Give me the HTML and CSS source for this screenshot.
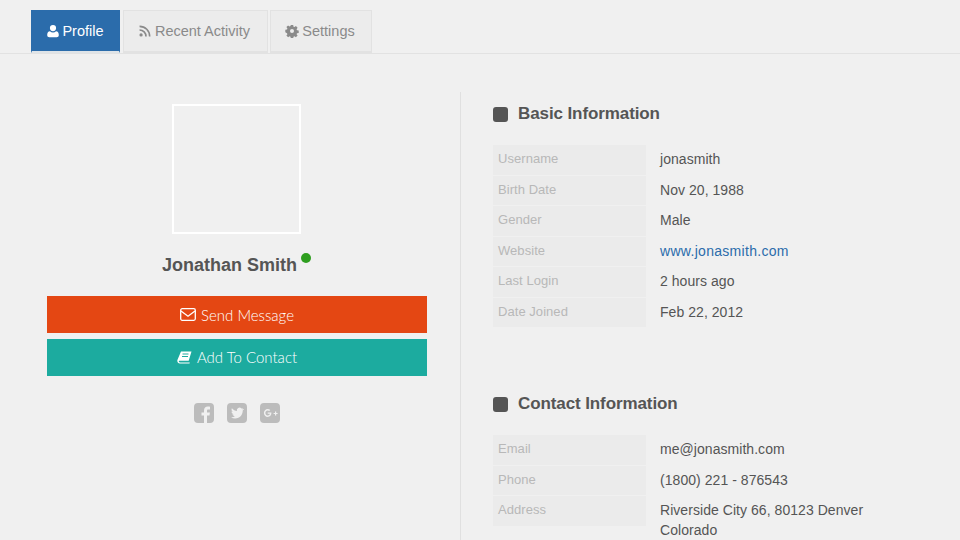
FILE: index.html
```html
<!DOCTYPE html>
<html lang="en">
<head>
<meta charset="utf-8">
<title>Profile</title>
<link rel="stylesheet" href="styles.css">
</head>
<body>
<nav class="tabs">
  <a class="tab tab-active"><svg class="ti" viewBox="0 0 12 14"><path fill="currentColor" d="M6 1a3.100 3.100 0 1 1 0 6.200A3.100 3.100 0 0 1 6 1zM3 7.200C3.800 8 4.800 8.400 6 8.400S8.200 8 9 7.200c1.800.2 2.800 1.500 2.800 3.800 0 1.500-.9 2.200-2.100 2.200H2.300C1.100 13.200.2 12.500.2 11c0-2.300 1-3.600 2.800-3.800z"/></svg>Profile</a>
  <a class="tab tab-shift"><svg class="ti ti-rss" viewBox="0 0 11 11"><g fill="none" stroke="currentColor" stroke-width="1.500"><path d="M.5 1.200c5.300 0 9.300 4 9.300 9.300"/><path d="M.5 4.600c3.400 0 5.900 2.500 5.900 5.900"/></g><circle cx="1.900" cy="9.100" r="1.500" fill="currentColor"/></svg>Recent Activity</a>
  <a class="tab tab-shift"><svg class="ti ti-gear" viewBox="0 0 14 14"><path fill="currentColor" fill-rule="evenodd" d="M5.800 1h2.400l.3 1.700 1 .4 1.400-1 1.700 1.700-1 1.400.4 1 1.700.3v2.400l-1.700.3-.4 1 1 1.400-1.700 1.700-1.400-1-1 .4-.3 1.700H5.800l-.3-1.700-1-.4-1.400 1-1.700-1.700 1-1.400-.4-1L.3 8.200V5.800L2 5.500l.4-1-1-1.400 1.700-1.700 1.400 1 1-.4zM7 5a2 2 0 1 0 0 4 2 2 0 0 0 0-4z"/></svg>Settings</a>
</nav>
<main class="layout">
  <section class="side">
    <div class="photo"></div>
    <h1 class="name">Jonathan Smith<span class="dot"></span></h1>
    <a class="btn btn-red"><svg class="bi" viewBox="0 0 16 13"><rect x=".7" y=".7" width="14.600" height="11.600" rx="1.500" fill="none" stroke="currentColor" stroke-width="1.300"/><path d="M1 3l7 5.200L15 3" fill="none" stroke="currentColor" stroke-width="1.300"/></svg>Send Message</a>
    <a class="btn btn-teal"><svg class="bi book" viewBox="0 0 15 13"><path fill="currentColor" d="M4 .5h10.500l-2.800 9.300H2.600c-.8 0-.9.500-.7 1 .2.400.6.700 1.200.7h9.700l-.3 1H2.800C1.400 12.500.4 11.500.3 10c0-.5 0-.8.200-1.300z"/><path stroke="#1cab9f" d="M5.500 3h6M5 5.500h6"/></svg>Add To Contact</a>
    <div class="social">
      <svg class="si" viewBox="0 0 20 20"><path fill="#bcbcbc" fill-rule="evenodd" d="M4 0h12a4 4 0 0 1 4 4v12a4 4 0 0 1-4 4h-3v-7.500h2.500l.4-3H13V7.800c0-.9.3-1.400 1.500-1.400H16V3.700c-.4 0-1.200-.1-2.200-.1-2.200 0-3.800 1.400-3.800 3.800v2.100H7.500v3H10V20H4a4 4 0 0 1-4-4V4a4 4 0 0 1 4-4z"/></svg>
      <svg class="si" viewBox="0 0 20 20"><path fill="#bcbcbc" fill-rule="evenodd" d="M4 0h12a4 4 0 0 1 4 4v12a4 4 0 0 1-4 4H4a4 4 0 0 1-4-4V4a4 4 0 0 1 4-4zm12.500 5.900c-.5.200-1 .4-1.500.4.600-.3 1-.8 1.200-1.400-.5.300-1.100.5-1.700.6a2.700 2.700 0 0 0-4.600 2.500C8.200 8 6.200 6.900 4.900 5.300c-.7 1.200-.3 2.800.8 3.600-.4 0-.8-.1-1.200-.3 0 1.300.9 2.400 2.100 2.700-.4.100-.8.100-1.200 0 .3 1.100 1.300 1.800 2.500 1.900-1 .8-2.400 1.200-3.900 1 1.200.8 2.600 1.200 4.100 1.200 5 0 7.800-4.200 7.600-8 .5-.4 1-.9 1.400-1.500z"/></svg>
      <svg class="si" viewBox="0 0 20 20"><path fill="#bcbcbc" fill-rule="evenodd" d="M4 0h12a4 4 0 0 1 4 4v12a4 4 0 0 1-4 4H4a4 4 0 0 1-4-4V4a4 4 0 0 1 4-4zm3.700 6C5.600 6 3.900 7.800 3.900 10s1.700 4 3.800 4c2.300 0 3.700-1.600 3.700-3.900 0-.3 0-.5-.1-.7H7.700v1.400h2.200c-.1.700-.8 1.800-2.200 1.800-1.300 0-2.300-1.100-2.300-2.500s1-2.600 2.300-2.600c.7 0 1.200.3 1.500.6l1.100-1.100C9.600 6.400 8.700 6 7.700 6zm7.300 2.500v1.400h-1.400v1.200H15v1.400h1.200v-1.400h1.400V9.900h-1.400V8.500z"/></svg>
    </div>
  </section>
  <section class="info">
    <h2 class="heading first"><span class="square"></span>Basic Information</h2>
    <dl class="rows">
      <div class="row"><dt>Username</dt><dd>jonasmith</dd></div>
      <div class="row"><dt>Birth Date</dt><dd>Nov 20, 1988</dd></div>
      <div class="row"><dt>Gender</dt><dd>Male</dd></div>
      <div class="row"><dt>Website</dt><dd><a class="link">www.jonasmith.com</a></dd></div>
      <div class="row"><dt>Last Login</dt><dd>2 hours ago</dd></div>
      <div class="row"><dt>Date Joined</dt><dd>Feb 22, 2012</dd></div>
    </dl>
    <h2 class="heading second"><span class="square"></span>Contact Information</h2>
    <dl class="rows">
      <div class="row"><dt>Email</dt><dd>me@jonasmith.com</dd></div>
      <div class="row"><dt>Phone</dt><dd>(1800) 221 - 876543</dd></div>
      <div class="row"><dt>Address</dt><dd>Riverside City 66, 80123 Denver<br>Colorado</dd></div>
    </dl>
  </section>
</main>
</body>
</html>
```

FILE: styles.css
```css
* { box-sizing: border-box; }
html, body { margin: 0; height: 540px; overflow: hidden; }
body {
  background: #f0f0f0;
  color: #555;
  font-family: "Liberation Sans", Arial, sans-serif;
  padding-top: 10px;
}
.tabs {
  display: flex;
  gap: 3px;
  height: 44px;
  padding-left: 31px;
  border-bottom: 1px solid #e2e2e2;
}
.tab {
  display: flex;
  align-items: center;
  justify-content: center;
  height: 43px;
  font-size: 14.500px;
  color: #8a8a8a;
  background: #ececec;
  border: 1px solid #e2e2e2;
  border-bottom-width: 2px;
}
.tab:nth-child(1) { width: 89px; }
.tab:nth-child(2) { width: 145px; }
.tab:nth-child(3) { width: 102px; margin-left: -1px; }
.tab-shift { padding-right: 2px; }
.tab-active { background: #2b6cab; border-color: #2b6cab; border-bottom-color: #dfe4e8; color: #fff; }
.ti { width: 12px; height: 14px; margin-right: 3px; flex: none; }
.tab .ti-rss { width: 12px; height: 12px; margin-right: 4px; }
.tab .ti-gear { width: 14px; margin-right: 3px; }
.layout { display: flex; }
.side {
  width: 460px;
  padding: 50px 33px 0 47px;
  display: flex;
  flex-direction: column;
  align-items: center;
}
.photo { width: 129px; height: 130px; margin-right: 1px; border: 2px solid #fff; }
.name {
  position: relative;
  margin: 20px 15px 20px 0;
  height: 22px;
  font-size: 18px;
  line-height: 22px;
  font-weight: bold;
  color: #555;
}
.dot {
  position: absolute;
  right: -14px;
  top: -1px;
  width: 10px;
  height: 10px;
  border-radius: 50%;
  background: #2e9e1f;
}
.btn {
  width: 100%;
  height: 37px;
  flex: none;
  display: flex;
  align-items: center;
  justify-content: center;
  font-family: Lato, sans-serif;
  font-size: 15px;
  font-weight: 300;
  color: #fff;
}
.btn-red { background: #e44713; }
.btn-teal { background: #1cab9f; margin-top: 6px; padding-bottom: 1px; }
.bi { width: 16px; height: 13px; margin-right: 5px; flex: none; }
.book { width: 15px; margin-right: 5px; }
.social { display: flex; gap: 13px; margin-top: 27px; margin-left: -1px; }
.si { width: 20px; height: 20px; display: block; }
.info {
  flex: 1;
  margin-top: 38px;
  padding: 13px 0 0 32px;
  height: 460px;
  border-left: 1px solid #e0e0e0;
}
.heading {
  display: flex;
  align-items: center;
  margin: 0;
  height: 18px;
  font-size: 17px;
  font-weight: bold;
  letter-spacing: -.1px;
  color: #555;
}
.heading.second { margin-top: 68px; }
.square {
  width: 15px;
  height: 15px;
  margin-right: 10px;
  border-radius: 3px;
  background: #555;
  flex: none;
}
.rows { margin: 22px 0 0; display: flex; flex-direction: column; gap: 1px; }
.row { display: flex; min-height: 29.500px; }
dt {
  width: 153px;
  height: 29.500px;
  padding: 0 5px;
  background: #ebebeb;
  color: #b8b8b8;
  font-size: 13px;
  line-height: 27px;
  letter-spacing: .05px;
  flex: none;
}
dd {
  margin: 0 0 0 14px;
  font-size: 14px;
  line-height: 20px;
  padding-top: 4px;
  color: #555;
  letter-spacing: .05px;
}
.link { color: #2b6cab; letter-spacing: .3px; }
```
